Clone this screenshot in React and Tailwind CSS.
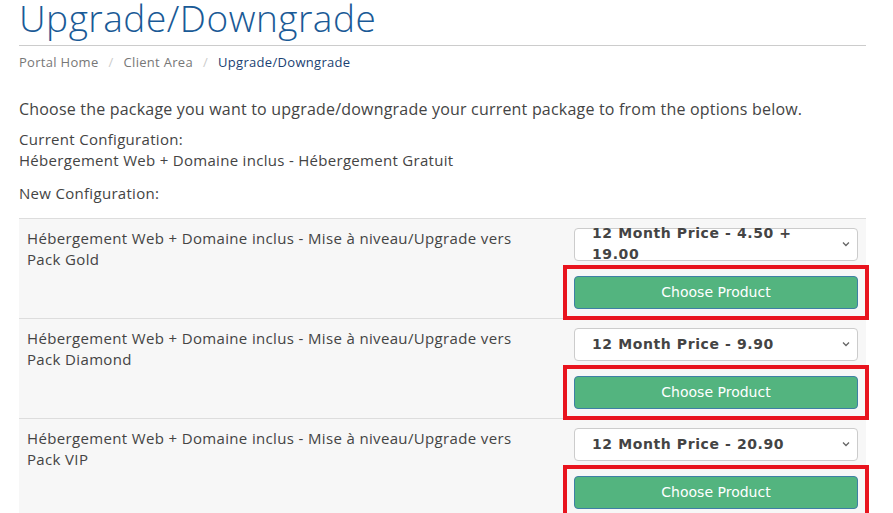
import React from 'react'

const rows = [
  { name: 'Hébergement Web + Domaine inclus - Mise à niveau/Upgrade vers Pack Gold', price: '12 Month Price - 4.50 + 19.00' },
  { name: 'Hébergement Web + Domaine inclus - Mise à niveau/Upgrade vers Pack Diamond', price: '12 Month Price - 9.90' },
  { name: 'Hébergement Web + Domaine inclus - Mise à niveau/Upgrade vers Pack VIP', price: '12 Month Price - 20.90' },
]

const App = () => {
  return (
    <div className='h-[513px] overflow-hidden bg-white pl-[19px] pr-[27px] text-[#444]' style={{ fontFamily: '"Open Sans", Lato, sans-serif' }}>
      <h1 className='-mt-[8px] pb-[1px] text-[37px] leading-[52px] font-light tracking-[0.5px] text-[#1a5a96] border-b border-[#ccc]'>Upgrade/Downgrade</h1>
      <div className='mt-[7px] flex items-center text-[13px] text-[#777] tracking-[0.3px]'>
        <span>Portal Home</span>
        <span className='mx-[10px] text-[#ccc]'>/</span>
        <span>Client Area</span>
        <span className='mx-[10px] text-[#ccc]'>/</span>
        <span className='text-[#1a3f73]'>Upgrade/Downgrade</span>
      </div>
      <p className='mt-[25px] text-[16px] leading-[22px] tracking-[0.2px]'>Choose the package you want to upgrade/downgrade your current package to from the options below.</p>
      <p className='mt-[9px] text-[15px] leading-[21px] tracking-[0.3px]'>Current Configuration:<br />Hébergement Web + Domaine inclus - Hébergement Gratuit</p>
      <p className='mt-[12px] text-[15px] leading-[21px] tracking-[0.3px]'>New Configuration:</p>
      <div className='mt-[14px]'>
        {rows.map((r, i) => (
          <div key={i} className='flex h-[100px] border-t border-[#ddd] bg-[#f7f7f7] pl-[8px] pr-[8px] pt-[9px]'>
            <div className='w-[520px] text-[15px] leading-[21px] tracking-[0.35px]'>{r.name}</div>
            <div className='ml-auto w-[284px]'>
              <div className='flex h-[33px] items-center rounded border border-[#ccc] bg-white pl-[17px] pr-[6px] text-[14px] font-bold tracking-[0.6px] text-[#444]' style={{ fontFamily: '"DejaVu Sans", Verdana, sans-serif' }}>
                <span>{r.price}</span>
                <svg className='ml-auto' width='10' height='10' viewBox='0 0 10 10'><path d='M2 3.5l3 3 3-3' fill='none' stroke='#666' strokeWidth='1.3' /></svg>
              </div>
              <div className='mt-[15px] outline-4 outline-[#e8141e] outline-offset-[7px]'>
                <button className='block h-[33px] w-full rounded border border-[#3e7fa5] bg-[#53b47f] text-[14px] text-white' style={{ fontFamily: '"DejaVu Sans", Verdana, sans-serif' }}>Choose Product</button>
              </div>
            </div>
          </div>
        ))}
      </div>
    </div>
  )
}

export default App
